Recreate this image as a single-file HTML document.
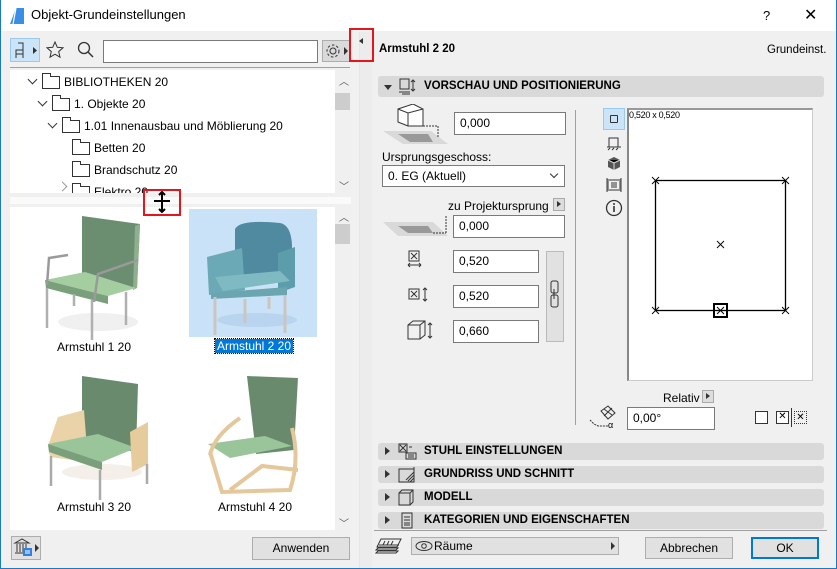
<!DOCTYPE html>
<html><head><meta charset="utf-8"><style>
*{box-sizing:border-box;margin:0;padding:0}
body{width:837px;height:569px;overflow:hidden;background:#f0f0f0;font-family:"Liberation Sans",sans-serif;font-size:12px;color:#000;position:relative}
.a{position:absolute}
.win{position:absolute;left:0;top:0;width:837px;height:569px;border:1px solid #1979ca;border-top:none}
.inp{position:absolute;background:#fff;border:1px solid #7a7a7a;padding-left:5px;line-height:20px;font-size:12px}
.btn{position:absolute;background:#e1e1e1;border:1px solid #adadad;text-align:center;font-size:12px}
.sec{position:absolute;left:378px;width:446px;height:17px;background:#d9d9d9;border-radius:3px;font-weight:bold;font-size:11.5px;line-height:17px}
.sec .t{position:absolute;left:46px}
.tri{position:absolute;left:7px;top:4px;width:0;height:0;border-top:4px solid transparent;border-bottom:4px solid transparent;border-left:5px solid #333}
.tr{position:absolute;font-size:12px;white-space:nowrap}
.fold{position:absolute;width:18px;height:13px;border:1px solid #333;background:#fff}
.fold:before{content:"";position:absolute;left:-1px;top:-4px;width:7px;height:3px;border:1px solid #333;border-bottom:none;background:#fff}
.chev{position:absolute;width:7px;height:7px;border-right:1.5px solid #333;border-bottom:1.5px solid #333;transform:rotate(45deg)}
</style></head><body>
<div class="win"></div>
<div class="a" style="left:1px;top:0;width:835px;height:31px;background:#fff"></div>
<svg class="a" style="left:9px;top:7px" width="16" height="18"><path d="M1 17 L7 1 L15 1 L15 17 Z" fill="#3a8ee6"/><path d="M7 1 L4 17" stroke="#fff" stroke-width="1.2"/></svg>
<div class="a" style="left:31px;top:7px;font-size:13px">Objekt-Grundeinstellungen</div>
<div class="a" style="left:763px;top:8px;font-size:13px">?</div>
<div class="a" style="left:804px;top:5px;font-size:16px">✕</div>

<div class="a" style="left:10px;top:38px;width:30px;height:24px;background:#cce4f7;border:1px solid #99c9ef"></div>
<svg class="a" style="left:14px;top:42px" width="24" height="17"><path d="M4 1h5v7H2v8M9 8v8M2 12h7" fill="none" stroke="#333"/><path d="M19 5l4 3.5-4 3.5z" fill="#333"/></svg>
<svg class="a" style="left:46px;top:41px" width="18" height="18"><path d="M9 1l2.3 5.3 5.7.5-4.3 3.8 1.3 5.6L9 13.2 4 16.2l1.3-5.6L1 6.8l5.7-.5z" fill="none" stroke="#333"/></svg>
<svg class="a" style="left:77px;top:41px" width="18" height="18"><circle cx="7" cy="7" r="5.5" fill="none" stroke="#333" stroke-width="1.3"/><path d="M11 11l5 5" stroke="#333" stroke-width="1.5"/></svg>
<div class="inp" style="left:103px;top:40px;width:215px;height:23px"></div>
<div class="a" style="left:322px;top:40px;width:28px;height:22px;background:#dadada;border:1px solid #adadad"></div>
<svg class="a" style="left:324px;top:42px" width="26" height="18"><circle cx="9" cy="9" r="3" fill="none" stroke="#333"/><circle cx="9" cy="9" r="6" fill="none" stroke="#333" stroke-dasharray="2.5 2"/><path d="M20 5l4 4-4 4z" fill="#333"/></svg>
<div class="a" style="left:10px;top:67px;width:340px;height:1px;background:#a0a0a0"></div>

<div class="a" style="left:10px;top:70px;width:325px;height:123px;background:#fff;overflow:hidden">
 <div class="chev" style="left:19px;top:6px"></div><div class="fold" style="left:32px;top:6px"></div><div class="tr" style="left:54px;top:5px">BIBLIOTHEKEN 20</div>
 <div class="chev" style="left:29px;top:28px"></div><div class="fold" style="left:42px;top:28px"></div><div class="tr" style="left:64px;top:27px">1. Objekte 20</div>
 <div class="chev" style="left:39px;top:50px"></div><div class="fold" style="left:52px;top:50px"></div><div class="tr" style="left:74px;top:49px">1.01 Innenausbau und Möblierung 20</div>
 <div class="fold" style="left:62px;top:72px"></div><div class="tr" style="left:84px;top:71px">Betten 20</div>
 <div class="fold" style="left:62px;top:94px"></div><div class="tr" style="left:84px;top:93px">Brandschutz 20</div>
 <div class="chev" style="left:49px;top:113px;transform:rotate(-45deg);border-color:#999"></div><div class="fold" style="left:62px;top:116px"></div><div class="tr" style="left:84px;top:115px">Elektro 20</div>
</div>
<div class="a" style="left:335px;top:70px;width:15px;height:123px;background:#f0f0f0"></div>
<div class="a" style="left:339px;top:73px;font-size:10px;color:#555">︿</div>
<div class="a" style="left:335px;top:93px;width:15px;height:17px;background:#cdcdcd"></div>
<div class="a" style="left:339px;top:178px;font-size:10px;color:#555">﹀</div>

<div class="a" style="left:10px;top:197px;width:341px;height:7px;background:#fafafa"></div>

<div class="a" style="left:10px;top:207px;width:325px;height:323px;background:#fff"></div>
<div class="a" style="left:335px;top:207px;width:15px;height:323px;background:#f0f0f0"></div>
<div class="a" style="left:339px;top:209px;font-size:10px;color:#555">︿</div>
<div class="a" style="left:335px;top:224px;width:15px;height:20px;background:#cdcdcd"></div>
<div class="a" style="left:339px;top:515px;font-size:10px;color:#555">﹀</div>

<!-- chair 1 -->
<svg class="a" style="left:40px;top:210px" width="110" height="130">
<ellipse cx="58" cy="112" rx="40" ry="9" fill="#f0f0f0"/>
<path d="M42 6 L100 14 L97 78 L42 68 Z" fill="#6b8d70"/>
<path d="M95 16 L100 14 L97 78 L93 80Z" fill="#8fb08f"/>
<path d="M5 70 L45 62 L96 78 L68 86 Z" fill="#a5cea0"/>
<path d="M5 70 L68 86 L68 94 L6 78Z" fill="#7aa07b"/>
<path d="M7 78v40M86 82v33M52 90v48M34 84v12" stroke="#b0b0b0" stroke-width="2.5"/>
<path d="M7 75 L9 48 L28 45M54 92 L58 64 L98 50" stroke="#9a9a9a" stroke-width="2.5" fill="none"/>
</svg>
<div class="a" style="left:57px;top:340px;font-size:12px">Armstuhl 1 20</div>
<!-- chair 2 -->
<div class="a" style="left:189px;top:209px;width:128px;height:128px;background:#c9e2f8"></div>
<svg class="a" style="left:195px;top:215px" width="115" height="120">
<ellipse cx="62" cy="105" rx="40" ry="7" fill="#b8d4ee"/>
<path d="M40 14 Q45 4 85 8 Q96 10 97 30 L97 60 L40 60 Z" fill="#4f8aa0"/>
<path d="M12 42 L47 33 L50 75 L14 80Z" fill="#6aa9b5"/>
<path d="M83 38 L100 32 L100 72 L83 78Z" fill="#5c9cab"/>
<path d="M20 62 L85 56 L95 66 L28 76 Z" fill="#7fbac2"/>
<path d="M16 78 L92 72 L92 80 L16 84Z" fill="#6aa5b0"/>
<path d="M20 82v40M50 84v24M90 80v38M74 82v12" stroke="#cbc5bf" stroke-width="3"/>
</svg>
<div class="a" style="left:215px;top:339px;padding:0 2px;background:#0078d7;color:#fff;outline:1px dotted #000;font-size:12px;line-height:14px">Armstuhl 2 20</div>
<!-- chair 3 -->
<svg class="a" style="left:40px;top:372px" width="110" height="130">
<ellipse cx="62" cy="100" rx="40" ry="8" fill="#f5efe9"/>
<path d="M42 4 L98 12 L96 80 L42 70 Z" fill="#6a8a6e"/>
<path d="M8 74 L18 45 L44 38 L48 90 L10 85Z" fill="#ead3a8"/>
<path d="M8 72 L58 62 L96 76 L62 90Z" fill="#9ac49a"/>
<path d="M8 72 L62 90 L62 98 L9 80Z" fill="#7aa07b"/>
<path d="M90 60 L108 50 L108 92 L92 100Z" fill="#e6cb9c"/>
<path d="M11 84v30M60 98v30M107 92v20" stroke="#aaa" stroke-width="2.5"/>
</svg>
<div class="a" style="left:57px;top:500px;font-size:12px">Armstuhl 3 20</div>
<!-- chair 4 -->
<svg class="a" style="left:200px;top:370px" width="110" height="130">
<path d="M47 6 L98 8 L94 80 L56 84 Z" fill="#6a8a6e"/>
<path d="M8 74 L65 66 L92 76 L30 88 Z" fill="#9ac49a"/>
<path d="M10 85 Q14 66 40 48 M92 58 Q100 90 90 120 L22 122 L10 82 M30 120 L62 96 L98 100" stroke="#e4c79a" stroke-width="4" fill="none"/>
</svg>
<div class="a" style="left:218px;top:500px;font-size:12px">Armstuhl 4 20</div>

<div class="a" style="left:11px;top:536px;width:30px;height:24px;background:#e1e1e1;border:1px solid #adadad"></div>
<svg class="a" style="left:13px;top:538px" width="27" height="20"><path d="M2 5L9 1l7 4H2zM4 6v8M7 6v8M10 6v8M13 6v8M2 15h10" stroke="#333" fill="none"/><rect x="10" y="10" width="9" height="8" fill="#2f82e0"/><path d="M12 13h5M12 15h5" stroke="#fff"/><path d="M22 6l4 4-4 4z" fill="#333"/></svg>
<div class="btn" style="left:252px;top:537px;width:98px;height:23px;line-height:21px">Anwenden</div>

<div class="a" style="left:359px;top:32px;width:1px;height:536px;background:#e6e6e6"></div>
<div class="a" style="left:360px;top:32px;width:12px;height:536px;background:#ececec"></div>
<div class="a" style="left:349px;top:28px;width:25px;height:34px;border:2px solid #e8141b"></div>
<div class="a" style="left:359px;top:38px;width:0;height:0;border-top:3.5px solid transparent;border-bottom:3.5px solid transparent;border-right:4px solid #333"></div>
<div class="a" style="left:143px;top:189px;width:38px;height:27px;border:2px solid #e8141b"></div>
<svg class="a" style="left:150px;top:191px" width="24" height="22"><path d="M12 1v20M4 10h16M9 4l3-3 3 3M9 18l3 3 3-3" stroke="#000" stroke-width="2" fill="none"/></svg>

<div class="a" style="left:379px;top:43px;font-weight:bold;font-size:11.5px">Armstuhl 2 20</div>
<div class="a" style="left:767px;top:44px;font-size:11.5px">Grundeinst.</div>

<div class="sec" style="top:76px;height:21px;line-height:21px"><div class="tri" style="left:6px;top:9px;border-left:4px solid transparent;border-right:4px solid transparent;border-top:5px solid #333;border-bottom:none"></div>
<svg class="a" style="left:20px;top:2px" width="20" height="17"><rect x="2" y="1" width="9" height="10" fill="none" stroke="#333"/><path d="M1 14h11M4 16h8M15 2v11M13 4l2-2 2 2M13 11l2 2 2-2" stroke="#333" fill="none"/></svg>
<span class="t">VORSCHAU UND POSITIONIERUNG</span></div>

<svg class="a" style="left:383px;top:104px" width="65" height="40"><path d="M0 27 L20 40 L65 40 L48 27Z" fill="#d9d9d9"/><path d="M15 30 L27 38 L50 38 L45 30Z" fill="#999"/><path d="M15 5 L30 0 L40 5 L40 22 L25 22 L15 18Z" fill="#fff" stroke="#333"/><path d="M15 5L25 9L40 5M25 9v13" stroke="#333" fill="none"/><path d="M40 22 L55 22M55 22v12" stroke="#333" stroke-dasharray="2 1" fill="none"/></svg>
<div class="inp" style="left:454px;top:112px;width:112px;height:23px">0,000</div>
<div class="a" style="left:382px;top:150px;font-size:12px">Ursprungsgeschoss:</div>
<div class="inp" style="left:382px;top:165px;width:183px;height:22px">0. EG (Aktuell)</div>
<div class="chev" style="left:551px;top:171px;width:6px;height:6px;border-width:1px"></div>
<div class="a" style="left:448px;top:199px;font-size:12px">zu Projektursprung</div>
<div class="a" style="left:553px;top:198px;width:12px;height:13px;background:#ddd;border:1px solid #aaa"></div>
<div class="a" style="left:557px;top:201px;width:0;height:0;border-top:3.5px solid transparent;border-bottom:3.5px solid transparent;border-left:4px solid #333"></div>
<svg class="a" style="left:383px;top:216px" width="70" height="22"><path d="M0 6 L15 20 L65 20 L50 6Z" fill="#d9d9d9"/><path d="M15 10 L25 17 L50 17 L45 10Z" fill="#999"/><path d="M50 17 L63 17M63 17V0" stroke="#333" stroke-dasharray="2 1"/></svg>
<div class="inp" style="left:453px;top:215px;width:112px;height:23px">0,000</div>

<svg class="a" style="left:407px;top:250px" width="20" height="22"><rect x="2" y="1" width="10" height="10" fill="none" stroke="#333"/><path d="M4 3l6 6M10 3l-6 6M1 15h13M1 15l2-2M1 15l2 2M14 15l-2-2M14 15l-2 2" stroke="#333" fill="none"/></svg>
<div class="inp" style="left:453px;top:250px;width:86px;height:23px">0,520</div>
<svg class="a" style="left:408px;top:287px" width="24" height="16"><rect x="1" y="2" width="10" height="10" fill="none" stroke="#333"/><path d="M3 4l6 6M9 4l-6 6M17 1v13M15 3l2-2 2 2M15 12l2 2 2-2" stroke="#333" fill="none"/></svg>
<div class="inp" style="left:453px;top:285px;width:86px;height:23px">0,520</div>
<svg class="a" style="left:407px;top:320px" width="28" height="22"><path d="M1 5 L6 1 L18 1 L18 15 L13 19 L1 19Z M1 5 L13 5 L13 19 M13 5 L18 1" fill="none" stroke="#333"/><path d="M23 3v15M21 5l2-2 2 2M21 16l2 2 2-2" stroke="#333" fill="none"/></svg>
<div class="inp" style="left:453px;top:320px;width:86px;height:23px">0,660</div>
<div class="a" style="left:546px;top:251px;width:18px;height:91px;background:#e1e1e1;border:1px solid #bbb"></div>
<svg class="a" style="left:549px;top:280px" width="12" height="30"><rect x="2" y="1" width="7" height="12" rx="2" fill="none" stroke="#333"/><rect x="2" y="15" width="7" height="12" rx="2" fill="none" stroke="#333"/><path d="M5 9v10" stroke="#333"/></svg>

<div class="a" style="left:575px;top:110px;width:1px;height:315px;background:#a0a0a0"></div>

<div class="a" style="left:603px;top:108px;width:22px;height:22px;background:#cce4f7;border:1px solid #99c9ef"></div>
<div class="a" style="left:610px;top:115px;width:8px;height:8px;border:1px solid #333;border-radius:1px"></div>
<svg class="a" style="left:605px;top:135px" width="18" height="18"><path d="M4 12V3h9v9M2 12h14M3 15l2-2M7 15l2-2M11 15l2-2" stroke="#333" fill="none"/></svg>
<svg class="a" style="left:605px;top:155px" width="18" height="18"><path d="M9 2l6 3v7l-6 3-6-3V5z" fill="#555"/><path d="M3 5l6 3 6-3M9 8v7" stroke="#ddd"/></svg>
<svg class="a" style="left:605px;top:176px" width="18" height="18"><path d="M2 2v14M16 2v14M2 4h14M2 14h14M6 7h6M6 9h6M6 11h6M2 6h2M2 8h2M2 10h2M2 12h2M14 6h2M14 8h2M14 10h2M14 12h2" stroke="#333" fill="none"/></svg>
<svg class="a" style="left:605px;top:199px" width="18" height="18"><circle cx="9" cy="9" r="7.5" fill="none" stroke="#333" stroke-width="1.3"/><path d="M9 7v6" stroke="#333" stroke-width="1.6"/><circle cx="9" cy="5" r="1" fill="#333"/></svg>

<div class="a" style="left:627px;top:108px;width:186px;height:273px;background:#fff;border:1px solid #ccc;border-left:2px solid #888;border-top:2px solid #999"></div>
<div class="a" style="left:629px;top:110px;font-size:9px;letter-spacing:-0.3px">0,520 x 0,520</div>
<svg class="a" style="left:627px;top:108px" width="186" height="273">
<rect x="28.5" y="72.5" width="130" height="130" fill="none" stroke="#000" stroke-width="1.3"/>
<g stroke="#000" stroke-width="0.9"><path d="M25 69l7 7M32 69l-7 7M155 69l7 7M162 69l-7 7M25 199l7 7M32 199l-7 7M155 199l7 7M162 199l-7 7M90 133l7 7M97 133l-7 7M90 199l7 7M97 199l-7 7"/></g>
<rect x="87" y="196" width="13" height="13" fill="none" stroke="#000" stroke-width="2"/>
</svg>
<div class="a" style="left:663px;top:391px;font-size:12px">Relativ</div>
<div class="a" style="left:702px;top:390px;width:12px;height:13px;background:#ddd;border:1px solid #aaa"></div>
<div class="a" style="left:706px;top:393px;width:0;height:0;border-top:3.5px solid transparent;border-bottom:3.5px solid transparent;border-left:4px solid #333"></div>
<svg class="a" style="left:588px;top:405px" width="30" height="26"><path d="M13 6l7-5 7 7-7 6z" fill="none" stroke="#333"/><path d="M16 4l8 6M24 3l-8 8" stroke="#333"/><path d="M2 15l4 4 4 2h10" stroke="#333" stroke-dasharray="2 1" fill="none"/><text x="20" y="23" font-size="9" font-family="Liberation Sans">α</text></svg>
<div class="inp" style="left:627px;top:407px;width:88px;height:23px">0,00°</div>
<div class="a" style="left:755px;top:411px;width:13px;height:13px;border:1px solid #333;background:#fff"></div>
<div class="a" style="left:776px;top:411px;width:13px;height:13px;border:1.5px solid #333;background:#fff;font-size:10px;line-height:10px;text-align:center">✕</div>
<div class="a" style="left:791px;top:408px;width:1px;height:19px;background:#333"></div>
<div class="a" style="left:794px;top:411px;width:13px;height:13px;border:1px dotted #333;font-size:10px;line-height:11px;text-align:center">✕</div>

<div class="sec" style="top:443px"><div class="tri"></div><svg class="a" style="left:20px;top:0" width="20" height="17"><rect x="1" y="1" width="8" height="8" fill="none" stroke="#333"/><path d="M2 2l6 6M8 2l-6 6M11 4h3M8 10h10v6H8zM10 12h6M10 14h6" stroke="#333" fill="none"/></svg><span class="t">STUHL EINSTELLUNGEN</span></div>
<div class="sec" style="top:466px"><div class="tri"></div><svg class="a" style="left:20px;top:0" width="20" height="17"><rect x="1" y="3" width="15" height="13" fill="none" stroke="#333"/><path d="M8 14l8-8M10 15l6-6M12 16l4-4M16 1v8" stroke="#333"/></svg><span class="t">GRUNDRISS UND SCHNITT</span></div>
<div class="sec" style="top:489px"><div class="tri"></div><svg class="a" style="left:20px;top:0" width="20" height="17"><path d="M1 4l3-3h11v12l-3 3H1zM1 4h11v12M12 4l3-3" fill="none" stroke="#333"/></svg><span class="t">MODELL</span></div>
<div class="sec" style="top:512px"><div class="tri"></div><svg class="a" style="left:22px;top:0" width="16" height="17"><rect x="2" y="1" width="10" height="15" fill="none" stroke="#333"/><path d="M4 5h6M4 8h6M4 11h6M4 13h6" stroke="#333"/></svg><span class="t">KATEGORIEN UND EIGENSCHAFTEN</span></div>
<div class="a" style="left:374px;top:530px;width:453px;height:1px;background:#a0a0a0"></div>

<svg class="a" style="left:375px;top:537px" width="28" height="18"><path d="M6 2h20l-4 8H2zM4 8h20M3 11h20l-2 2H1zM3 14h20l-2 2H1z" fill="none" stroke="#333"/><path d="M10 4l-2 4M14 4l-2 4M18 4l-2 4" stroke="#333"/></svg>
<div class="a" style="left:411px;top:537px;width:208px;height:18px;background:#e1e1e1;border:1px solid #adadad"></div>
<svg class="a" style="left:415px;top:540px" width="20" height="12"><ellipse cx="9" cy="6" rx="8" ry="4.5" fill="none" stroke="#333"/><circle cx="9" cy="6" r="2.3" fill="none" stroke="#333"/></svg>
<div class="a" style="left:434px;top:539px;font-size:12px">Räume</div>
<div class="a" style="left:611px;top:542px;width:0;height:0;border-top:4px solid transparent;border-bottom:4px solid transparent;border-left:4px solid #333"></div>
<div class="btn" style="left:645px;top:537px;width:88px;height:22px;line-height:20px">Abbrechen</div>
<div class="btn" style="left:751px;top:537px;width:68px;height:22px;line-height:18px;border:2px solid #0078d7">OK</div>
</body></html>
